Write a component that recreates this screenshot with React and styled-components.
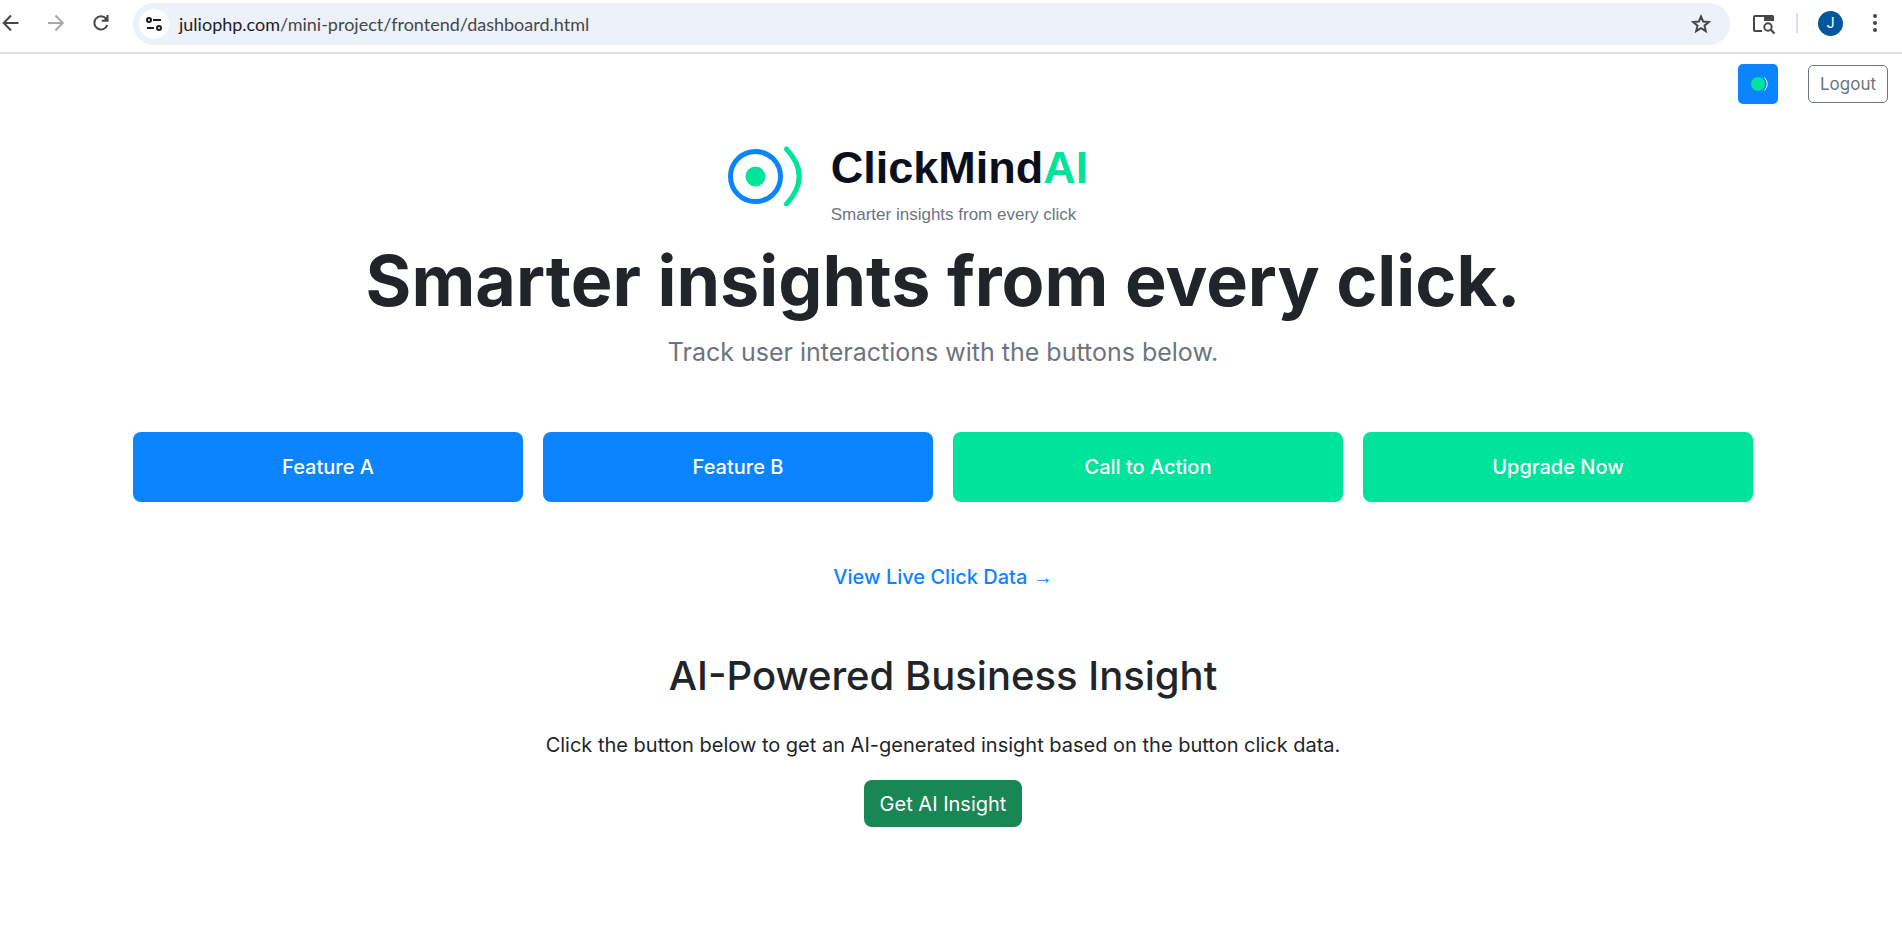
import React from "react";
import styled, { createGlobalStyle } from "styled-components";

const GlobalStyle = createGlobalStyle`
  *, *::before, *::after { box-sizing: border-box; }
  body {
    margin: 0;
    background: #fff;
    color: #212529;
    font: 400 20px/30px Inter, "Liberation Sans", sans-serif;
  }
  button, input { font: inherit; }
`;

const Toolbar = styled.header`
  display: flex;
  align-items: center;
  height: 54px;
  padding: 0 14px 6px 0;
  border-bottom: 2px solid #e1e1e1;
`;

const IconButton = styled.button`
  display: flex;
  align-items: center;
  justify-content: center;
  flex: none;
  width: ${(p) => p.$width || 46}px;
  height: 40px;
  padding: 0;
  border: 0;
  background: none;
  color: ${(p) => (p.$muted ? "#a9a9a9" : "#474747")};
`;

const NavGroup = styled.nav`
  display: flex;
  align-items: center;
  width: 133px;
`;

const AddressBar = styled.div`
  display: flex;
  align-items: center;
  flex: 1;
  height: 42px;
  margin-top: 2px;
  padding: 0 6px;
  border-radius: 21px;
  background: #ecf1fa;
`;

const SiteInfo = styled.button`
  display: flex;
  align-items: center;
  justify-content: center;
  width: 30px;
  height: 30px;
  padding: 0;
  border: 0;
  border-radius: 50%;
  background: #fff;
  color: #1f1f1f;
`;

const Address = styled.div`
  flex: 1;
  padding-left: 10px;
  font: 400 18px/24px Lato, "Open Sans", sans-serif;
  color: #474747;
`;

const Host = styled.span`
  color: #1f1f1f;
`;

const Separator = styled.span`
  width: 2px;
  height: 20px;
  margin-right: 20px;
  background: #d3e3fd;
`;

const Avatar = styled.button`
  width: 25px;
  height: 25px;
  margin-right: 19px;
  padding: 0;
  border: 0;
  border-radius: 50%;
  background: #00579b;
  color: #fff;
  font: 400 14px/25px Roboto, sans-serif;
  text-align: center;
`;

const Page = styled.div`
  padding-right: 16px;
`;

const AccountBar = styled.div`
  display: flex;
  justify-content: flex-end;
  align-items: center;
  gap: 30px;
  height: 60px;
  margin-right: -2px;
`;

const Badge = styled.a`
  display: block;
  width: 40px;
  height: 40px;
  border-radius: 5px;
  background: #0a84ff;
`;

const LogoutButton = styled.button`
  height: 38px;
  padding: 0 11px;
  border: 1px solid #6c757d;
  border-radius: 5px;
  background: #fff;
  color: #6c757d;
  font-size: 17px;
  line-height: 26px;
`;

const Main = styled.main`
  display: flex;
  flex-direction: column;
  align-items: center;
  max-width: 1650px;
  margin: 0 auto;
  padding: 30px 15px 0;
  text-align: center;
`;

const Brand = styled.div`
  display: flex;
  gap: 28px;
  height: 95px;
  margin-right: 70px;
  text-align: left;
  font-family: "Liberation Sans", Arial, sans-serif;
`;

const BrandName = styled.div`
  font-size: 45px;
  font-weight: 700;
  line-height: 48px;
  color: #0a0f1c;
`;

const Accent = styled.span`
  color: #00e39b;
`;

const Tagline = styled.div`
  margin-top: 10px;
  font-size: 17px;
  line-height: 26px;
  color: #6c757d;
`;

const Title = styled.h1`
  margin: 0 0 10px;
  font-size: 70px;
  font-weight: 700;
  line-height: 84px;
`;

const Lead = styled.p`
  margin: 0 0 61px;
  font-size: 25px;
  line-height: 38px;
  color: #6c757d;
`;

const FeatureGrid = styled.div`
  display: grid;
  grid-template-columns: repeat(4, 1fr);
  gap: 20px;
  align-self: stretch;
`;

const FeatureButton = styled.button`
  height: 70px;
  border: 0;
  border-radius: 8px;
  background: ${(p) => (p.$green ? "#00e39b" : "#0a84ff")};
  color: #fff;
  font-weight: 500;
`;

const DataLink = styled.a`
  margin: 60px 0;
  color: #0a84ff;
  font-weight: 500;
  text-decoration: none;
`;

const Arrow = styled.span`
  font-family: "Liberation Serif", serif;
  font-weight: 400;
`;

const SectionTitle = styled.h2`
  margin: 0 0 30px;
  font-size: 40px;
  font-weight: 500;
  line-height: 48px;
`;

const Text = styled.p`
  margin: 0 0 20px;
`;

const InsightButton = styled.button`
  height: 47px;
  padding: 0 16px;
  border: 0;
  border-radius: 8px;
  background: #198754;
  color: #fff;
`;

const Stroke = ({ size = 20, children, width = 2 }) => (
  <svg width={size} height={size} viewBox={`0 0 ${size} ${size}`} fill="none" stroke="currentColor" strokeWidth={width} aria-hidden="true">
    {children}
  </svg>
);

const LogoMark = () => (
  <svg width="75" height="62" viewBox="0 0 75 62" fill="none" aria-hidden="true">
    <circle cx="27.5" cy="32.5" r="25" stroke="#0a84ff" strokeWidth="5" />
    <circle cx="27.5" cy="32.5" r="10" fill="#00e39b" />
    <path d="M58.5 5 Q84 32.5 58.5 60" stroke="#00e39b" strokeWidth="5" strokeLinecap="round" />
  </svg>
);

export default function App() {
  return (
    <>
      <GlobalStyle />
      <Toolbar>
        <NavGroup aria-label="Browser">
          <IconButton $width={22} aria-label="Back">
            <Stroke><path d="M17.500 10H3M10 2.500L2.700 10l7.300 7.500" /></Stroke>
          </IconButton>
          <IconButton $width={68} $muted aria-label="Forward">
            <Stroke><path d="M2 10h14.500M9.500 2.500l7.300 7.500-7.300 7.500" /></Stroke>
          </IconButton>
          <IconButton $width={22} aria-label="Reload">
            <Stroke>
              <path d="M16.300 12.200a6.700 6.700 0 1 1-1.200-6.700l1.200 1.300" />
              <path d="M16.500 2v5.700h-5.700" />
              <path d="M16.500 3.500v4h-4z" fill="currentColor" stroke="none" />
            </Stroke>
          </IconButton>
        </NavGroup>
        <AddressBar>
          <SiteInfo aria-label="Site information">
            <Stroke size={18}>
              <circle cx="4" cy="5" r="2" /><path d="M8 5h8M2 13h7" /><circle cx="14" cy="13" r="2" />
            </Stroke>
          </SiteInfo>
          <Address><Host>juliophp.com</Host>/mini-project/frontend/dashboard.html</Address>
          <IconButton aria-label="Bookmark">
            <Stroke><path d="M10 2.500l2.200 5.100 5.500.5-4.200 3.600 1.300 5.400-4.800-2.900-4.800 2.900 1.300-5.400L2.300 8.100l5.500-.5z" /></Stroke>
          </IconButton>
        </AddressBar>
        <IconButton $width={66} aria-label="Search this page">
          <Stroke size={24}>
            <path d="M11 20H4a1 1 0 0 1-1-1V6a1 1 0 0 1 1-1h10" />
            <path d="M13 4h8.500a1.500 1.500 0 0 1 1.500 1.500V10H13z" fill="currentColor" stroke="none" />
            <circle cx="17" cy="16" r="3.700" /><path d="M19.700 18.700L23.500 22.500" />
          </Stroke>
        </IconButton>
        <Separator />
        <Avatar aria-label="Profile">J</Avatar>
        <IconButton $width={26} aria-label="Menu">
          <svg width="20" height="20" viewBox="0 0 20 20" fill="currentColor" aria-hidden="true">
            <circle cx="10" cy="3" r="2" /><circle cx="10" cy="10" r="2" /><circle cx="10" cy="17" r="2" />
          </svg>
        </IconButton>
      </Toolbar>
      <Page>
        <AccountBar>
          <Badge href="#" aria-label="ClickMindAI home">
            <svg width="40" height="40" viewBox="0 0 40 40" fill="none" aria-hidden="true">
              <circle cx="20" cy="20" r="7" fill="#00e39b" />
              <path d="M26.500 13.500Q32 20 26.500 26.500" stroke="#fff" strokeWidth="1" />
            </svg>
          </Badge>
          <LogoutButton>Logout</LogoutButton>
        </AccountBar>
        <Main>
          <Brand>
            <LogoMark />
            <div>
              <BrandName>ClickMind<Accent>AI</Accent></BrandName>
              <Tagline>Smarter insights from every click</Tagline>
            </div>
          </Brand>
          <Title>Smarter insights from every click.</Title>
          <Lead>Track user interactions with the buttons below.</Lead>
          <FeatureGrid>
            <FeatureButton>Feature A</FeatureButton>
            <FeatureButton>Feature B</FeatureButton>
            <FeatureButton $green>Call to Action</FeatureButton>
            <FeatureButton $green>Upgrade Now</FeatureButton>
          </FeatureGrid>
          <DataLink href="#">View Live Click Data <Arrow>→</Arrow></DataLink>
          <SectionTitle>AI-Powered Business Insight</SectionTitle>
          <Text>Click the button below to get an AI-generated insight based on the button click data.</Text>
          <InsightButton>Get AI Insight</InsightButton>
        </Main>
      </Page>
    </>
  );
}
